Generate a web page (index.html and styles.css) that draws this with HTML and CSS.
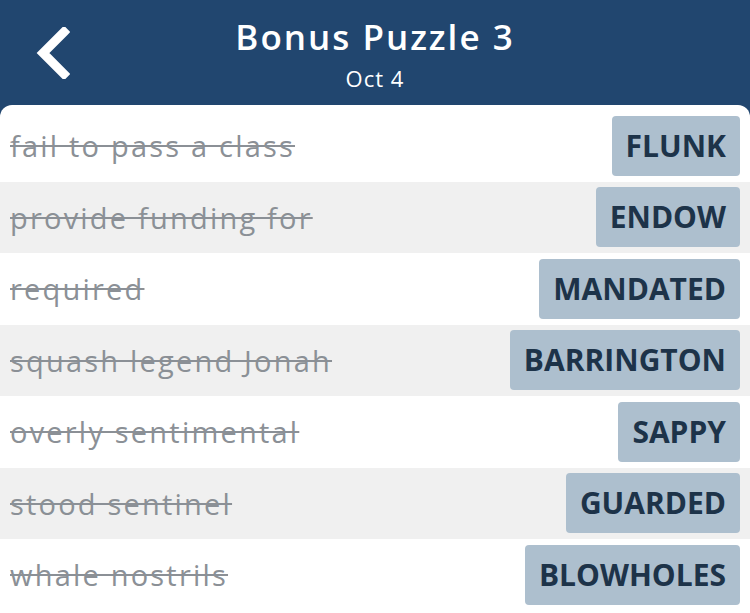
FILE: index.html
```html
<!DOCTYPE html>
<html lang="en">
<head>
    <meta charset="UTF-8" />
    <meta name="viewport" content="width=device-width, initial-scale=1" />
    <title>Bonus Puzzle 3</title>
    <link rel="stylesheet" href="styles.css">
</head>
<body>
    <div class="header">
        <span class="back">
            <svg width="36" height="52" viewBox="0 0 36 52">
                <path d="M30 5 L9 26 L30 47" fill="none" stroke="#ffffff" stroke-width="9" stroke-linecap="square" stroke-linejoin="miter" />
            </svg>
        </span>
        <div class="title">Bonus Puzzle 3</div>
        <div class="date">Oct 4</div>
    </div>
    <div class="panel">
        <div class="row">
            <span class="clue">fail to pass a class</span>
            <span class="answer">FLUNK</span>
        </div>
        <div class="row">
            <span class="clue">provide funding for</span>
            <span class="answer">ENDOW</span>
        </div>
        <div class="row">
            <span class="clue">required</span>
            <span class="answer">MANDATED</span>
        </div>
        <div class="row">
            <span class="clue">squash legend Jonah</span>
            <span class="answer">BARRINGTON</span>
        </div>
        <div class="row">
            <span class="clue">overly sentimental</span>
            <span class="answer">SAPPY</span>
        </div>
        <div class="row">
            <span class="clue">stood sentinel</span>
            <span class="answer">GUARDED</span>
        </div>
        <div class="row">
            <span class="clue">whale nostrils</span>
            <span class="answer">BLOWHOLES</span>
        </div>
    </div>
</body>
</html>
```
FILE: styles.css
```css
body {
    margin: 0;
    background-color: #21466f;
    font-family: "Open Sans", "Noto Sans", sans-serif;
    overflow: hidden;
}
.header {
    position: relative;
    height: 105px;
    color: white;
    text-align: center;
}
.back {
    position: absolute;
    left: 34px;
    top: 27px;
}
.title {
    padding-top: 12px;
    font-size: 35px;
    font-weight: 600;
    letter-spacing: 2px;
    line-height: 50px;
}
.date {
    font-size: 22px;
    letter-spacing: 1px;
    line-height: 32px;
}
.panel {
    background-color: white;
    border-radius: 12px 12px 0 0;
    padding-top: 5px;
    height: 510px;
}
.row {
    display: flex;
    align-items: center;
    justify-content: space-between;
    height: 71.5px;
    padding: 0 10px;
}
.row:nth-child(even) {
    background-color: #f0f0f0;
}
.clue {
    font-size: 29px;
    letter-spacing: 2.2px;
    color: #8b9096;
    text-decoration: line-through;
}
.answer {
    background-color: #adbfce;
    color: #1d3349;
    font-size: 30px;
    font-weight: bold;
    height: 60px;
    line-height: 60px;
    padding: 0 14px;
    border-radius: 4px;
}
```
